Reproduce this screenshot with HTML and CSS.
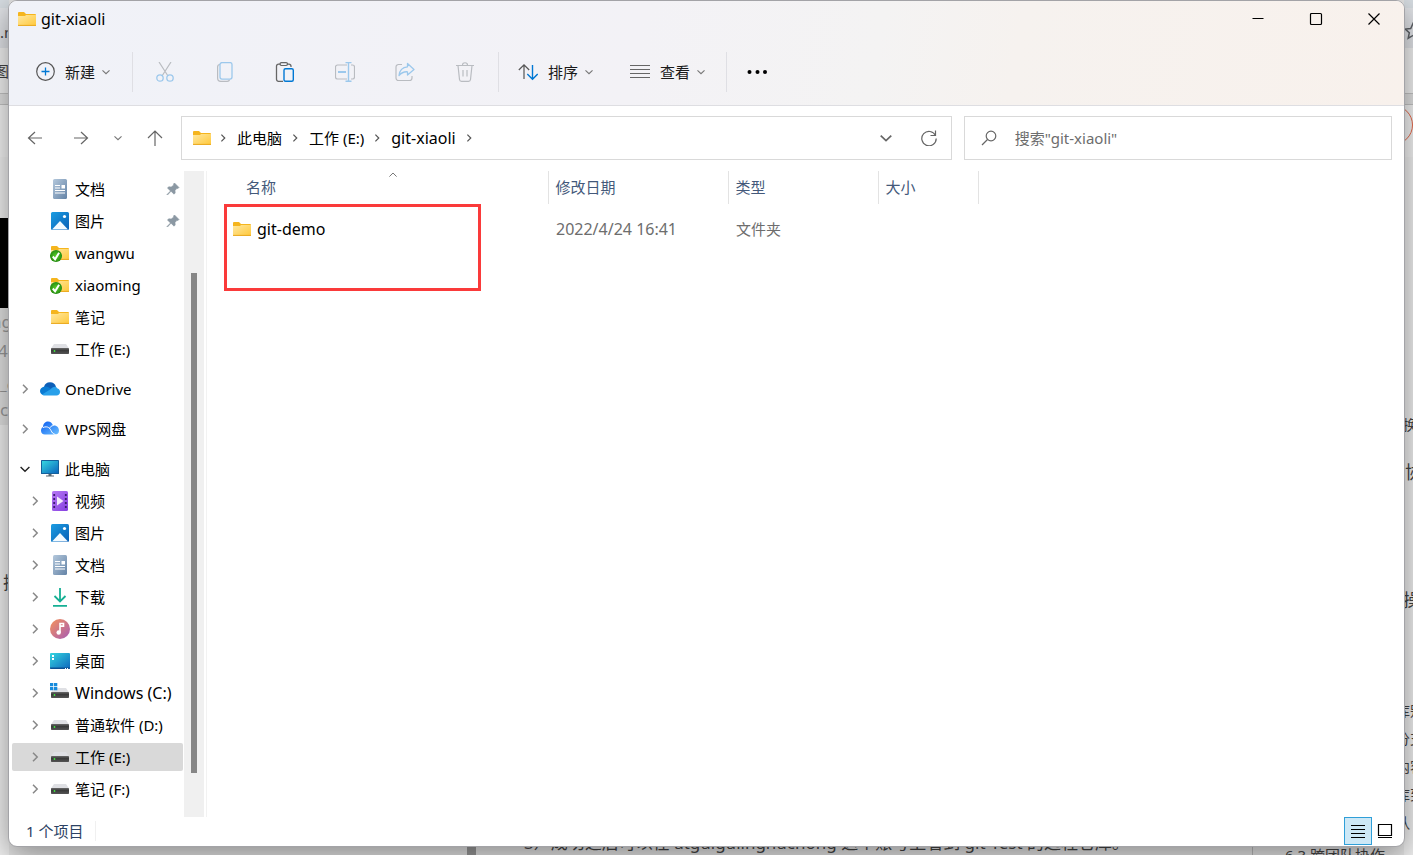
FILE: index.html
```html
<!DOCTYPE html>
<html lang="zh-CN">
<head>
<meta charset="utf-8">
<title>git-xiaoli</title>
<link rel="stylesheet" href="styles.css">
</head>
<body>
<svg class="defs" aria-hidden="true">
  <defs>
    <linearGradient id="gFolder" x1="0" y1="0" x2="1" y2="1"><stop offset="0" stop-color="#ffe8a0"/><stop offset="1" stop-color="#ffc83a"/></linearGradient>
    <linearGradient id="gDoc" x1="0" y1="0" x2="1" y2="1"><stop offset="0" stop-color="#b4c8dc"/><stop offset="1" stop-color="#6483a6"/></linearGradient>
    <linearGradient id="gPic" x1="0" y1="0" x2="1" y2="1"><stop offset="0" stop-color="#1b9de2"/><stop offset="1" stop-color="#0a5fb5"/></linearGradient>
    <linearGradient id="gScreen" x1="0" y1="0" x2="1" y2="1"><stop offset="0" stop-color="#35d6e0"/><stop offset="1" stop-color="#0d66bd"/></linearGradient>
    <linearGradient id="gVideo" x1="0" y1="0" x2="1" y2="1"><stop offset="0" stop-color="#b678f4"/><stop offset="1" stop-color="#8540e0"/></linearGradient>
    <linearGradient id="gMusic" x1="0" y1="0" x2="1" y2="1"><stop offset="0" stop-color="#f6935a"/><stop offset="1" stop-color="#a65bb5"/></linearGradient>
    <linearGradient id="gWps" x1="0" y1="0" x2="1" y2="1"><stop offset="0" stop-color="#0a5cf0"/><stop offset="1" stop-color="#6cc0ff"/></linearGradient>
    <radialGradient id="gOk"><stop offset="0" stop-color="#5fd02c"/><stop offset="1" stop-color="#238c10"/></radialGradient>
    <linearGradient id="gDrive" x1="0" y1="0" x2="0" y2="1"><stop offset="0" stop-color="#6a6a6a"/><stop offset=".4" stop-color="#3a3a3a"/><stop offset="1" stop-color="#555"/></linearGradient>
  </defs>
  <symbol id="folder" viewBox="0 0 20 20"><path d="M1 4a1 1 0 0 1 1-1h5l2 2h9a1 1 0 0 1 1 1v4H1z" fill="#f5b51e"/><path d="M1 7h7l1-1h10v10a1 1 0 0 1-1 1H2a1 1 0 0 1-1-1z" fill="url(#gFolder)"/><path d="M1 16.4h18" stroke="#e9a820"/></symbol>
  <symbol id="folder-ok" viewBox="0 0 20 20"><use href="#folder"/><circle cx="6" cy="13" r="6" fill="url(#gOk)"/><path d="M2.800 13.500l2.300 2.800 4-6.600" fill="none" stroke="#fff" stroke-width="2"/></symbol>
  <symbol id="doc" viewBox="0 0 20 20"><rect x="3" y="0" width="14" height="20" rx="1.5" fill="url(#gDoc)"/><path d="M5 6.500h5M5 9h5M5 11.500h10M5 14h10" stroke="#fff" stroke-width="1.200"/><rect x="11.500" y="6" width="3.500" height="3.500" fill="#fff"/></symbol>
  <symbol id="picture" viewBox="0 0 20 20"><rect x="1" y="1" width="18" height="18" rx="1.500" fill="url(#gPic)"/><path d="M2 18.500L10 10l8 8.500z" fill="#f3faff"/><circle cx="14.500" cy="5.500" r="1.600" fill="#fff"/></symbol>
  <symbol id="drive" viewBox="0 0 20 20"><path d="M4 5h12l3 4.500v1H1v-1z" fill="#dfe0e4"/><rect x="1" y="9" width="18" height="6" rx=".7" fill="url(#gDrive)"/><circle cx="4.500" cy="12" r=".9" fill="#40e840"/></symbol>
  <symbol id="windrive" viewBox="0 0 20 20"><use href="#drive"/><path d="M0 0h3.300v3.300H0zM4 0h3.300v3.300H4zM0 4h3.300v3.300H0zM4 4h3.300v3.300H4z" fill="#168bdc"/></symbol>
  <symbol id="onedrive" viewBox="0 0 20 20"><path d="M4 8a6.200 6.200 0 0 1 12 0l-6 6z" fill="#0d5fb8"/><path d="M4.500 7.500C1.500 8 0 10 0 12s1.500 4 4 4l8-5.500C10 8.500 7 7 4.500 7.500z" fill="#0a7bd3"/><path d="M2 15.500L11 10c1-2 5-3.500 6.500-.500 2 .500 2.500 2 2.500 3.500 0 2-1.500 3.500-3.500 3.500h-12c-1 0-2-.500-2.500-1z" fill="#28a0ea"/></symbol>
  <symbol id="wps" viewBox="0 0 20 20"><path d="M3 8c0-3 2-5.500 5-5.500 2.500 0 4 1.500 5 4 3-.500 6 1.500 6 5 0 3-2 4-4 4H5c-2.500 0-4-1.500-4-4 0-2 1-3 2-3.500z" fill="url(#gWps)"/><path d="M3 8.500c5-2 7 1 8 3s2 3.500 4.500 4M9.500 9.500c1-2 2-2.800 4-3" fill="none" stroke="#fff"/></symbol>
  <symbol id="pc" viewBox="0 0 20 20"><rect x="1" y="1" width="18" height="14" rx=".6" fill="#15609b"/><rect x="2" y="2" width="16" height="12" fill="url(#gScreen)"/><path d="M8.500 15h3v1.500h2.500v1H6v-1h2.500z" fill="#5b6770"/></symbol>
  <symbol id="video" viewBox="0 0 20 20"><rect x="2" y="0" width="16" height="20" rx="1.500" fill="url(#gVideo)"/><path d="M4.200 3v15M15.800 3v15" stroke="#3d1b72" stroke-width="1.800" stroke-dasharray="2 2"/><path d="M7 5.500l6.500 4.500L7 14.500z" fill="#f3eafc"/></symbol>
  <symbol id="download" viewBox="0 0 20 20"><path d="M10 1v13M4.500 9l5.500 5.500L15.500 9M3 18.800h14" fill="none" stroke="#16b094" stroke-width="1.800"/></symbol>
  <symbol id="music" viewBox="0 0 20 20"><circle cx="10" cy="10" r="10" fill="url(#gMusic)"/><circle cx="8.700" cy="13.500" r="2.200" fill="#fff"/><path d="M10 13.500V4.500h3.500v2.600H10.500" fill="none" stroke="#fff" stroke-width="1.600"/></symbol>
  <symbol id="desktop" viewBox="0 0 20 20"><rect x="0" y="2" width="20" height="16" rx="1" fill="url(#gScreen)"/><path d="M0 16.500h20v.5a1 1 0 0 1-1 1H1a1 1 0 0 1-1-1z" fill="#0c4f91"/><path d="M2 4h2v2H2zM2 7h2v2H2zM15 17h1v1h-1zM17 17h1v1h-1z" fill="#fff"/></symbol>
  <symbol id="pin" viewBox="0 0 14 14"><path d="M8.500 1l4.500 4.500-1 1-1-.300-2 2.300.200 2.500-1.200 1.200-3-3L1.500 13 1 12.500 4.500 9l-3-3L2.700 4.800l2.500.200 2.600-2-.300-1z" fill="#8b98a3" stroke="#8b98a3" stroke-width=".6"/></symbol>
  <symbol id="right" viewBox="0 0 10 10"><path d="M3 .8L7.200 5 3 9.200" fill="none" stroke="currentColor" stroke-width="1.500"/></symbol>
  <symbol id="down" viewBox="0 0 10 10"><path d="M.6 3L5 7.200 9.400 3" fill="none" stroke="currentColor" stroke-width="1.400"/></symbol>
</svg>

<div class="backdrop" aria-hidden="true">
  <div class="edge edge-left">
    <div class="black"></div>
    <div class="code"></div>
    <span class="bt l1">.n</span><span class="bt l2">图</span><span class="bt l3">ng</span><span class="bt l4">40</span><span class="bt l5">_c</span><span class="bt l6">c</span><span class="bt l7">把</span>
  </div>
  <div class="edge edge-right">
    <svg class="star" viewBox="0 0 18 18"><path d="M9 1.500l2.300 5 5.400.600-4 3.700 1.100 5.400L9 13.500l-4.800 2.700 1.100-5.400-4-3.700 5.400-.600z" fill="none" stroke="#5f6368" stroke-width="1.500"/></svg>
    <div class="ring"></div>
    <span class="bt r1">换</span><span class="bt r2">协</span><span class="bt r3">操</span><span class="bt r4">库别</span><span class="bt r5">分支</span><span class="bt r6">内容</span><span class="bt r7">库到</span><span class="bt r8">队</span>
  </div>
  <div class="grip"></div>
  <div class="vline"></div>
  <span class="bt b1">3）成功之后可以在 atguigulinghuchong 这个账号上看到 git-Test 的远程仓库。</span>
  <span class="bt b2">6.3 跨团队协作</span>
</div>

<div class="window">
  <header class="top">
    <div class="titlebar">
      <svg class="i20"><use href="#folder"/></svg>
      <h1 class="latin">git-xiaoli</h1>
      <div class="controls">
        <button aria-label="最小化"><svg viewBox="0 0 14 14"><path d="M1.500 6.500h11" stroke="#000"/></svg></button>
        <button aria-label="最大化"><svg viewBox="0 0 14 14"><rect x="1.500" y="1.500" width="11" height="11" rx="1" fill="none" stroke="#000" stroke-width="1.200"/></svg></button>
        <button aria-label="关闭"><svg viewBox="0 0 14 14"><path d="M1.500 1.500l11 11M12.500 1.500l-11 11" stroke="#000" stroke-width="1.200"/></svg></button>
      </div>
    </div>
    <div class="toolbar" role="toolbar">
      <button class="cmd"><svg class="i20" viewBox="0 0 20 20" fill="none"><circle cx="10.500" cy="9.500" r="8.800" stroke="#555" stroke-width="1.200"/><path d="M6.500 9.500h8M10.500 5.500v8" stroke="#0078d4" stroke-width="1.300"/></svg><span>新建</span><svg class="i8"><use href="#down"/></svg></button>
      <i class="sep first"></i>
      <div class="tools">
      <button aria-label="剪切"><svg class="i20" viewBox="0 0 20 20" fill="none"><path d="M4 0l9 14M16 0L7 14" stroke="#b9bcc1" stroke-width="1.200"/><circle cx="5" cy="16" r="3.200" stroke="#9cc8ec" stroke-width="1.300"/><circle cx="15" cy="16" r="3.200" stroke="#9cc8ec" stroke-width="1.300"/></svg></button>
      <button aria-label="复制"><svg class="i20" viewBox="0 0 20 20" fill="none"><path d="M5 2.500C3.500 2.500 2.600 3.500 2.600 5v11c0 2 1.200 3.300 3.200 3.300h6.500c1.200 0 2-.600 2.300-1.500" stroke="#b9bcc1" stroke-width="1.200"/><rect x="5" y=".6" width="12" height="16.500" rx="2" stroke="#9cc8ec" stroke-width="1.300"/></svg></button>
      <button aria-label="粘贴"><svg class="i20" viewBox="0 0 20 20" fill="none"><path d="M8 19.300H3.500a2 2 0 0 1-2-2V4.200a2 2 0 0 1 2-2h2M12 2.200h2a2 2 0 0 1 2 2V5" stroke="#666" stroke-width="1.300"/><rect x="5" y=".7" width="7.500" height="2.800" rx="1.400" stroke="#666" stroke-width="1.200"/><rect x="9" y="6.700" width="9.300" height="12.600" rx="1.500" stroke="#0078d4" stroke-width="1.400"/></svg></button>
      <button aria-label="重命名"><svg class="i20" viewBox="0 0 20 20" fill="none"><path d="M12 3H2.500a2 2 0 0 0-2 2v10a2 2 0 0 0 2 2H12M16 3h1.500a2 2 0 0 1 2 2v10a2 2 0 0 1-2 2H16" stroke="#b9bcc1" stroke-width="1.200"/><path d="M3 10h8" stroke="#9cc8ec" stroke-width="2"/><path d="M10.500.6h6M10.500 19.300h6M13.500.6v18.700" stroke="#9cc8ec" stroke-width="1.400"/></svg></button>
      <button aria-label="共享"><svg class="i20" viewBox="0 0 20 20" fill="none"><path d="M7 2.500H3.500a2.500 2.500 0 0 0-2.500 2.500v11A2.500 2.500 0 0 0 3.500 18.500h11A2.500 2.500 0 0 0 17 16v-2" stroke="#b9bcc1" stroke-width="1.200"/><path d="M12.500 1.500L19 7.500l-6.500 5.500V9.800C8.500 9.500 6.500 10.500 4 13.500c.5-5 3.500-8.300 8.500-8.700z" stroke="#9cc8ec" stroke-width="1.300" stroke-linejoin="round"/></svg></button>
      <button aria-label="删除"><svg class="i20" viewBox="0 0 20 20" fill="none" stroke="#b9bcc1" stroke-width="1.200"><path d="M1 3.500h18M3 3.500l1.500 14a2 2 0 0 0 2 1.800h7a2 2 0 0 0 2-1.800l1.500-14M7.500 3c0-3 5-3 5 0M8 8v6.500M12 8v6.500"/></svg></button>
      </div>
      <i class="sep"></i>
      <div class="cmds">
      <button class="cmd"><svg class="i20" viewBox="0 0 20 20" fill="none"><path d="M6 17V3M.8 8L6 2.800 11.200 8" stroke="#555" stroke-width="1.200"/><path d="M14.500 3v14M9.300 12l5.200 5.200 5.200-5.200" stroke="#0078d4" stroke-width="1.400"/></svg><span>排序</span><svg class="i8"><use href="#down"/></svg></button>
      <button class="cmd"><svg class="i20" viewBox="0 0 20 20"><path d="M0 3.500h20M0 7.500h20M0 11.500h20M0 15.500h20" stroke="#666" stroke-width="1.200"/></svg><span>查看</span><svg class="i8"><use href="#down"/></svg></button>
      </div>
      <i class="sep"></i>
      <button class="cmd more" aria-label="更多"><svg class="i20" viewBox="0 0 20 20"><circle cx="2.500" cy="10" r="2"/><circle cx="10.500" cy="10" r="2"/><circle cx="18" cy="10" r="2"/></svg></button>
    </div>
  </header>

  <div class="navrow">
    <div class="arrows">
      <button aria-label="后退"><svg class="i16" viewBox="0 0 16 16"><path d="M15 8H1.500M8 2L1.500 8 8 14"/></svg></button>
      <button aria-label="前进"><svg class="i16" viewBox="0 0 16 16"><path d="M1 8h13.500M8 2l6.500 6L8 14"/></svg></button>
      <button class="recent" aria-label="最近"><svg class="i8"><use href="#down"/></svg></button>
      <button aria-label="上移"><svg class="i16" viewBox="0 0 16 16"><path d="M8 16V1M1 8l7-7 7 7"/></svg></button>
    </div>
    <div class="address">
      <svg class="i20"><use href="#folder"/></svg>
      <svg class="crumb"><use href="#right"/></svg><a href="#">此电脑</a>
      <svg class="crumb"><use href="#right"/></svg><a href="#">工作 (E:)</a>
      <svg class="crumb"><use href="#right"/></svg><a class="latin" href="#">git-xiaoli</a>
      <svg class="crumb"><use href="#right"/></svg>
      <button class="push" aria-label="历史"><svg class="i12"><use href="#down"/></svg></button>
      <button aria-label="刷新"><svg class="i16" viewBox="0 0 16 16"><path d="M14.500 5.500A7.200 7.200 0 1 0 15.200 8.500M14.500.500v5h-5"/></svg></button>
    </div>
    <label class="search">
      <svg class="i16" viewBox="0 0 16 16"><circle cx="10" cy="6" r="4.800"/><path d="M6.500 9.500L1 15"/></svg>
      <input type="text" placeholder='搜索"git-xiaoli"' aria-label="搜索">
    </label>
  </div>

  <div class="content">
    <nav class="side">
      <ul class="tree">
        <li><a class="row sub" href="#"><span class="tog"></span><svg class="i20"><use href="#doc"/></svg><span>文档</span><svg class="pin"><use href="#pin"/></svg></a></li>
        <li><a class="row sub" href="#"><span class="tog"></span><svg class="i20"><use href="#picture"/></svg><span>图片</span><svg class="pin"><use href="#pin"/></svg></a></li>
        <li><a class="row sub" href="#"><span class="tog"></span><svg class="i20"><use href="#folder-ok"/></svg><span>wangwu</span></a></li>
        <li><a class="row sub" href="#"><span class="tog"></span><svg class="i20"><use href="#folder-ok"/></svg><span>xiaoming</span></a></li>
        <li><a class="row sub" href="#"><span class="tog"></span><svg class="i20"><use href="#folder"/></svg><span>笔记</span></a></li>
        <li><a class="row sub" href="#"><span class="tog"></span><svg class="i20"><use href="#drive"/></svg><span>工作 (E:)</span></a></li>
        <li class="root"><a class="row" href="#"><svg class="tog"><use href="#right"/></svg><svg class="i20"><use href="#onedrive"/></svg><span>OneDrive</span></a></li>
        <li class="root"><a class="row" href="#"><svg class="tog"><use href="#right"/></svg><svg class="i20"><use href="#wps"/></svg><span>WPS网盘</span></a></li>
        <li class="root"><a class="row" href="#"><svg class="tog open"><use href="#down"/></svg><svg class="i20"><use href="#pc"/></svg><span>此电脑</span></a></li>
        <li><a class="row sub" href="#"><svg class="tog"><use href="#right"/></svg><svg class="i20"><use href="#video"/></svg><span>视频</span></a></li>
        <li><a class="row sub" href="#"><svg class="tog"><use href="#right"/></svg><svg class="i20"><use href="#picture"/></svg><span>图片</span></a></li>
        <li><a class="row sub" href="#"><svg class="tog"><use href="#right"/></svg><svg class="i20"><use href="#doc"/></svg><span>文档</span></a></li>
        <li><a class="row sub" href="#"><svg class="tog"><use href="#right"/></svg><svg class="i20"><use href="#download"/></svg><span>下载</span></a></li>
        <li><a class="row sub" href="#"><svg class="tog"><use href="#right"/></svg><svg class="i20"><use href="#music"/></svg><span>音乐</span></a></li>
        <li><a class="row sub" href="#"><svg class="tog"><use href="#right"/></svg><svg class="i20"><use href="#desktop"/></svg><span>桌面</span></a></li>
        <li><a class="row sub" href="#"><svg class="tog"><use href="#right"/></svg><svg class="i20"><use href="#windrive"/></svg><span class="latin">Windows (C:)</span></a></li>
        <li><a class="row sub" href="#"><svg class="tog"><use href="#right"/></svg><svg class="i20"><use href="#drive"/></svg><span>普通软件 (D:)</span></a></li>
        <li><a class="row sub selected" href="#"><svg class="tog"><use href="#right"/></svg><svg class="i20"><use href="#drive"/></svg><span>工作 (E:)</span></a></li>
        <li><a class="row sub" href="#"><svg class="tog"><use href="#right"/></svg><svg class="i20"><use href="#drive"/></svg><span>笔记 (F:)</span></a></li>
      </ul>
      <div class="scroll"><div class="thumb"></div></div>
    </nav>
    <main class="files">
      <table>
        <thead><tr>
          <th class="c-name">名称<svg class="sort" viewBox="0 0 10 10"><path d="M.5 7L5 2.500 9.500 7" fill="none" stroke="#555"/></svg></th>
          <th class="c-date">修改日期</th><th class="c-type">类型</th><th class="c-size">大小</th><th class="c-rest"></th>
        </tr></thead>
        <tbody><tr>
          <td><div class="fname"><svg class="i20"><use href="#folder"/></svg><span class="latin">git-demo</span></div></td>
          <td class="latin">2022/4/24 16:41</td><td>文件夹</td><td></td><td></td>
        </tr></tbody>
      </table>
      <div class="mark"></div>
    </main>
  </div>

  <footer class="status">
    <span class="count">1 个项目</span>
    <button class="view active" aria-label="详细信息"><svg viewBox="0 0 16 16"><path d="M1 2.500h14M1 6.500h14M1 10.500h14M1 14.500h14" stroke="#000"/></svg></button>
    <button class="view" aria-label="大图标"><svg viewBox="0 0 16 16"><path d="M1.500 1.500h13v11h-13zM1 14.500h14" fill="none" stroke="#000" stroke-width="1.200"/></svg></button>
  </footer>
</div>
</body>
</html>
```
FILE: styles.css
```css
* { box-sizing: border-box; }
html, body { height: 100%; margin: 0; }
body {
  position: relative;
  overflow: hidden;
  padding: 0 8px 8px;
  background: #e6e6e6;
  color: #000;
  font: 15px/20px "Noto Sans", "Noto Sans CJK SC", sans-serif;
}
button { padding: 0; border: 0; background: none; font: inherit; color: inherit; }
a { color: inherit; text-decoration: none; }
svg { display: block; flex: none; }
.defs { position: absolute; width: 0; height: 0; }
.i20 { width: 20px; height: 20px; }
.i16 { width: 16px; height: 16px; fill: none; stroke: #666; stroke-width: 1.2; }
.i12 { width: 12px; height: 12px; }
.i8 { width: 8px; height: 8px; color: #777; }
.latin { font-size: 16px; }

/* pages behind the window */
.backdrop { position: absolute; inset: 0; overflow: hidden; color: #444; }
.edge {
  position: absolute; top: 0; bottom: 0; width: 9px; overflow: hidden;
  background: linear-gradient(#d8dee3 8px, #e2e4e8 8px 48px, #f2f2f2 48px 93px, #c4c4c4 93px 94px, #e2e2e2 94px 104px, #c4c4c4 104px 105px, #f4f4f4 105px 157px, #f0f0f0 157px);
}
.edge-left { left: 0; }
.edge-right { right: 0; }
.black { position: absolute; left: 0; right: 0; top: 218px; height: 90px; background: #000; }
.code { position: absolute; left: 0; right: 0; top: 308px; height: 117px; background: #e2e2e2; }
.bt { position: absolute; white-space: nowrap; }
.l1 { left: 0; top: 22px; }
.l2 { left: -6px; top: 61px; }
.l3 { left: -9px; top: 312px; font-size: 17px; color: #999; }
.l4 { left: -2px; top: 341px; font-size: 17px; color: #999; }
.l5 { left: 0; top: 374px; color: #999; }
.l6 { left: 0; top: 400px; font-size: 17px; color: #999; }
.l7 { left: 3px; top: 573px; font-size: 17px; }
.star { position: absolute; left: 0; top: 22px; width: 18px; height: 18px; }
.ring { position: absolute; right: 0; top: 105px; width: 40px; height: 40px; border: 1px solid #e8694a; border-radius: 50%; }
.r1 { left: -1px; top: 415px; font-size: 14px; }
.r2 { left: 1px; top: 462px; font-size: 18px; }
.r3 { left: -1px; top: 590px; font-size: 18px; }
.r4 { left: -8px; top: 701px; font-size: 14px; }
.r5 { left: -8px; top: 729px; font-size: 14px; }
.r6 { left: -8px; top: 757px; font-size: 14px; }
.r7 { left: -8px; top: 785px; font-size: 14px; }
.r8 { left: -8px; top: 813px; font-size: 14px; }
.grip { position: absolute; left: 467px; bottom: 0; width: 9px; height: 10px; background: #999; }
.vline { position: absolute; right: 160px; bottom: 0; width: 1px; height: 10px; background: #bbb; }
.b1 { left: 524px; bottom: 2px; font-size: 17px; }
.b2 { left: 1285px; bottom: -10px; }

/* explorer window */
.window {
  position: relative;
  display: flex; flex-direction: column;
  height: 100%;
  overflow: hidden;
  border: 1px solid #a3a3a7;
  border-radius: 9px;
  background: #fff;
  box-shadow: 0 8px 32px rgba(0, 0, 0, .42);
}
.top {
  border-bottom: 1px solid #dedee2;
  background: linear-gradient(100deg, #f0f2f8 0%, #f3f2f6 45%, #f4f3f3 62%, #f6f2ef 72%, #f8f1ec 100%);
}
.titlebar { display: flex; align-items: center; height: 36px; padding-left: 8px; gap: 4px; }
h1 { margin: 0; font-weight: 400; }
.controls { display: flex; margin-left: auto; padding-right: 1px; }
.controls button { display: grid; place-items: center; width: 58px; height: 36px; }
.controls svg { width: 14px; height: 14px; }
.toolbar { display: flex; align-items: center; height: 68px; padding: 2px 0 0 26px; color: #1a1a1a; }
.cmd { display: flex; align-items: center; gap: 7px; }
.cmd span { padding-left: 3px; }
.sep { width: 1px; height: 40px; margin: 0 2px 0 21px; background: #dfdfe4; }
.sep.first { margin-left: 22px; }
.tools { display: flex; }
.tools + .sep { margin-left: 3px; }
.tools button { display: grid; place-items: center; width: 60px; height: 40px; }
.cmds { display: flex; gap: 37px; padding-left: 17px; }
.more { padding-left: 18px; }

.navrow {
  display: grid; grid-template-columns: auto minmax(0, 7fr) minmax(0, 4fr);
  padding: 10px 12px 11px 3px;
}
.arrows { display: flex; margin-right: 3px; }
.arrows button { display: grid; place-items: center; width: 46px; height: 44px; }
.arrows .recent { width: 28px; }
.address, .search { display: flex; align-items: center; height: 44px; border: 1px solid #d9d9d9; }
.address { padding: 0 14px 0 10px; }
.crumb { width: 8px; height: 8px; margin: 0 10px 0 7px; color: #555; }
.address a + .crumb { margin-left: 9px; }
.push { margin-left: auto; margin-right: 29px; color: #666; }
.search { margin-left: 12px; padding: 0 16px; gap: 18px; }
.search input { flex: 1; min-width: 0; padding: 0; border: 0; outline: 0; background: none; font: inherit; }
.search input::placeholder { color: #6d6d6d; opacity: 1; }

.content { flex: 1; display: flex; min-height: 0; }
.side { display: flex; width: 198px; border-right: 1px solid #f2f2f2; }
.tree { flex: 1; margin: 0; padding: 2px 1px 0 3px; list-style: none; }
.tree li { padding: 2px 0; }
.tree .root { padding-top: 10px; }
.row { display: flex; align-items: center; height: 28px; padding-left: 8px; border-radius: 2px; white-space: nowrap; }
.row.sub { padding-left: 18px; }
.row.selected { background: #d9d9d9; }
.tog { width: 10px; height: 10px; margin-right: 10px; color: #888; }
.tog.open { color: #222; }
.row .i20 { margin-right: 5px; }
.pin { width: 14px; height: 14px; margin: 0 3px 0 auto; }
.scroll { width: 20px; margin-right: 2px; padding-top: 102px; background: #f0f0f0; }
.thumb { width: 6px; height: 92%; margin-left: 7px; background: #868686; }

.files { position: relative; flex: 1; min-width: 0; }
table { width: 100%; border-collapse: collapse; table-layout: fixed; }
th { position: relative; height: 33px; padding: 0 0 1px 7px; border-right: 1px solid #e3e3e3; color: #44597a; font-weight: 400; text-align: left; }
.c-name { width: 341px; padding-left: 39px; }
.c-date { width: 180px; }
.c-type { width: 150px; }
.c-size { width: 100px; }
.c-rest { border: 0; }
.sort { position: absolute; left: 50%; top: 0; width: 10px; height: 8px; margin-left: 11px; }
td { height: 50px; padding: 0 0 0 8px; color: #6d6d6d; }
td:first-child { padding-left: 25px; }
.fname { display: flex; align-items: center; gap: 5px; color: #000; }
.mark { position: absolute; left: 17px; top: 33px; width: 257px; height: 87px; border: 3px solid #fa3a3a; }

.status { display: flex; align-items: flex-start; height: 29px; padding: 0 6px 0 17px; color: #2c4264; }
.count { margin: 4px auto 0 0; padding-right: 12px; border-right: 1px solid #f0f0f0; }
.view { display: grid; place-items: center; width: 26px; height: 28px; }
.view.active { width: 28px; border: 1px solid #2f9fd8; background: #cde8f6; }
.view svg { width: 16px; height: 16px; }
```
